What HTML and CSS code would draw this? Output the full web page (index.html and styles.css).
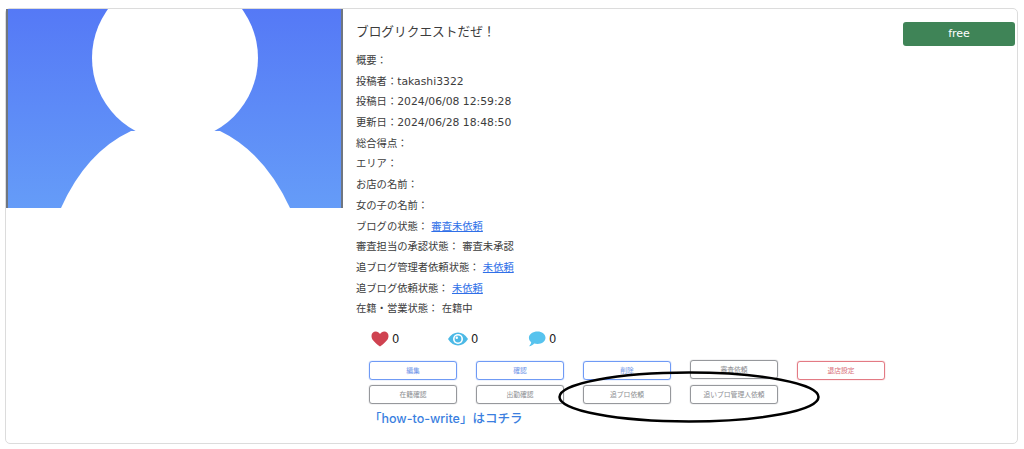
FILE: index.html
```html
<!DOCTYPE html>
<html lang="ja">
<head>
  <meta charset="UTF-8" />
  <title>ブログリクエストだぜ</title>
  <link rel="stylesheet" href="styles.css">
</head>
<body>

  <div class="card">
    <!-- Thumbnail -->
    <div class="thumb">
      <svg width="337" height="199" viewBox="0 0 337 199">
        <defs>
          <linearGradient id="sky" x1="0" y1="0" x2="0" y2="1">
            <stop offset="0" stop-color="#5579f6"/>
            <stop offset="1" stop-color="#659cf8"/>
          </linearGradient>
        </defs>
        <rect width="337" height="199" fill="url(#sky)"/>
        <rect width="2" height="199" fill="#6f7680"/>
        <rect x="335" width="2" height="199" fill="#6f7680"/>
        <circle cx="169" cy="49" r="83" fill="#fff"/>
        <path d="M125 122 Q80 143 55 199 L284 199 Q258 143 214 122 Z" fill="#fff"/>
      </svg>
    </div>

    <div class="info">
      <h2 class="title">ブログリクエストだぜ&#xFF01;</h2>
      <p class="row">概要&#xFF1A;</p>
      <p class="row">投稿者&#xFF1A;<span class="latin">takashi3322</span></p>
      <p class="row">投稿日&#xFF1A;<span class="latin">2024/06/08 12:59:28</span></p>
      <p class="row">更新日&#xFF1A;<span class="latin">2024/06/28 18:48:50</span></p>
      <p class="row">総合得点&#xFF1A;</p>
      <p class="row">エリア&#xFF1A;</p>
      <p class="row">お店の名前&#xFF1A;</p>
      <p class="row">女の子の名前&#xFF1A;</p>
      <p class="row">ブログの状態&#xFF1A; <a href="#">審査未依頼</a></p>
      <p class="row">審査担当の承認状態&#xFF1A; 審査未承認</p>
      <p class="row">追ブログ管理者依頼状態&#xFF1A; <a href="#">未依頼</a></p>
      <p class="row">追ブログ依頼状態&#xFF1A; <a href="#">未依頼</a></p>
      <p class="row">在籍・営業状態&#xFF1A; 在籍中</p>

      <div class="stats">
        <span class="stat stat-like">
          <svg width="18" height="16" viewBox="0 0 18 16">
            <path d="M9 15.5C3 11 .5 8.4.5 5 .5 2.4 2.4.6 4.8.6 6.5.6 8 1.500 9 3 10 1.500 11.500.6 13.200.6 15.600.6 17.500 2.400 17.500 5 17.500 8.400 15 11 9 15.500Z" fill="#cf4250"/>
          </svg>
          <span>0</span>
        </span>
        <span class="stat stat-view">
          <svg width="20" height="14" viewBox="0 0 20 14">
            <path d="M0 7C3 2.500 6.200.5 10 .5S17 2.500 20 7C17 11.500 13.800 13.500 10 13.500S3 11.500 0 7Z" fill="#4cb9e6"/>
            <circle cx="10" cy="7" r="5" fill="#fff"/>
            <circle cx="10" cy="7" r="3.400" fill="#4cb9e6"/>
            <circle cx="8.800" cy="5.800" r="1.200" fill="#fff"/>
          </svg>
          <span>0</span>
        </span>
        <span class="stat stat-comment">
          <svg width="18" height="16" viewBox="0 0 18 16">
            <path d="M9.500 .5C14 .5 17.500 3.200 17.500 6.800S14 13 9.500 13C8.300 13 7.200 12.800 6.200 12.500 5 13.800 3.300 15 1 15.300 2.300 14 3 12.800 3.200 11.300 1.700 10.100 .9 8.600 .9 6.800 .9 3.200 5 .5 9.500 .5Z" fill="#57c3ee"/>
          </svg>
          <span>0</span>
        </span>
      </div>

      <div class="actions">
        <a class="btn btn-blue" href="#">編集</a>
        <a class="btn btn-blue" href="#">確認</a>
        <a class="btn btn-blue" href="#">削除</a>
        <a class="btn btn-gray btn-raised" href="#">審査依頼</a>
        <a class="btn btn-red" href="#">退店設定</a>
        <a class="btn btn-gray" href="#">在籍確認</a>
        <a class="btn btn-gray" href="#">出勤確認</a>
        <a class="btn btn-gray" href="#">追プロ依頼</a>
        <a class="btn btn-gray" href="#">追いプロ管理人依頼</a>
      </div>

      <a class="howto" href="#">「how-to-write」はコチラ</a>
    </div>

    <a class="plan" href="#">free</a>

    <!-- Hand drawn annotation on top of the screenshot -->
    <svg class="circle-note" width="264" height="54" viewBox="0 0 264 54">
      <ellipse cx="132" cy="27" rx="129.500" ry="24.500" fill="none" stroke="#000" stroke-width="2.500"/>
    </svg>
  </div>

</body>
</html>
```

FILE: styles.css
```css
body {
  margin: 0;
  padding: 8px 6px 5px 5px;
  background: #fff;
  font-family: "DejaVu Sans", "Noto Sans CJK JP", sans-serif;
  color: #3c3c3c;
}

a {
  color: #2f6fe8;
}

.card {
  position: relative;
  display: flex;
  height: 434px;
  border: 1px solid #dcdcdc;
  border-radius: 5px;
}

.thumb {
  flex: none;
  width: 337px;
  height: 199px;
}

.thumb svg {
  display: block;
}

.info {
  flex: 1;
  padding: 14px 0 0 13px;
}

.title {
  margin: 0 0 9px;
  font-size: 12.7px;
  line-height: 18px;
  font-weight: normal;
}

.row {
  height: 20.7px;
  margin: 0;
  font-size: 10.3px;
  line-height: 20.7px;
}

.latin {
  font-size: 10.8px;
}

.stats {
  display: flex;
  margin: 11px 0 0 15px;
  height: 18px;
  align-items: center;
}

.stat {
  display: flex;
  align-items: center;
  gap: 3px;
  font-size: 11.5px;
  color: #222;
}

.stat-like {
  width: 77px;
}

.stat-view {
  width: 80px;
}

.actions {
  display: grid;
  grid-template-columns: repeat(5, 88px);
  grid-auto-rows: 19px;
  gap: 5px 19px;
  margin: 13px 0 0 13px;
}

.btn {
  display: flex;
  align-items: center;
  justify-content: center;
  box-sizing: border-box;
  border: 1px solid;
  border-radius: 3px;
  font-size: 6.8px;
  text-decoration: none;
}

.btn-blue {
  border-color: #6f9af5;
  box-shadow: 0 0 1px #4f83f1;
  color: #6f95e8;
}

.btn-gray {
  border-color: #96989c;
  box-shadow: 0 0 1px #85878b;
  color: #8c8e92;
}

.btn-red {
  border-color: #e37a84;
  box-shadow: 0 0 1px #dc5a66;
  color: #d9707a;
}

.btn-raised {
  margin-top: -1px;
  margin-bottom: 1px;
}

.howto {
  display: inline-block;
  margin: 6px 0 0 13px;
  font-family: Inter, "Noto Sans CJK JP", sans-serif;
  font-size: 12.5px;
  line-height: 18px;
  font-weight: 500;
  color: #3b7fe0;
  text-decoration: none;
}

.plan {
  flex: none;
  align-self: flex-start;
  width: 112px;
  height: 24px;
  margin: 13px 2px 0 0;
  background: #3f8457;
  border-radius: 3px;
  color: #fff;
  font-size: 11px;
  line-height: 24px;
  text-align: center;
  text-decoration: none;
}

.circle-note {
  position: absolute;
  left: 551px;
  top: 361px;
}
```
